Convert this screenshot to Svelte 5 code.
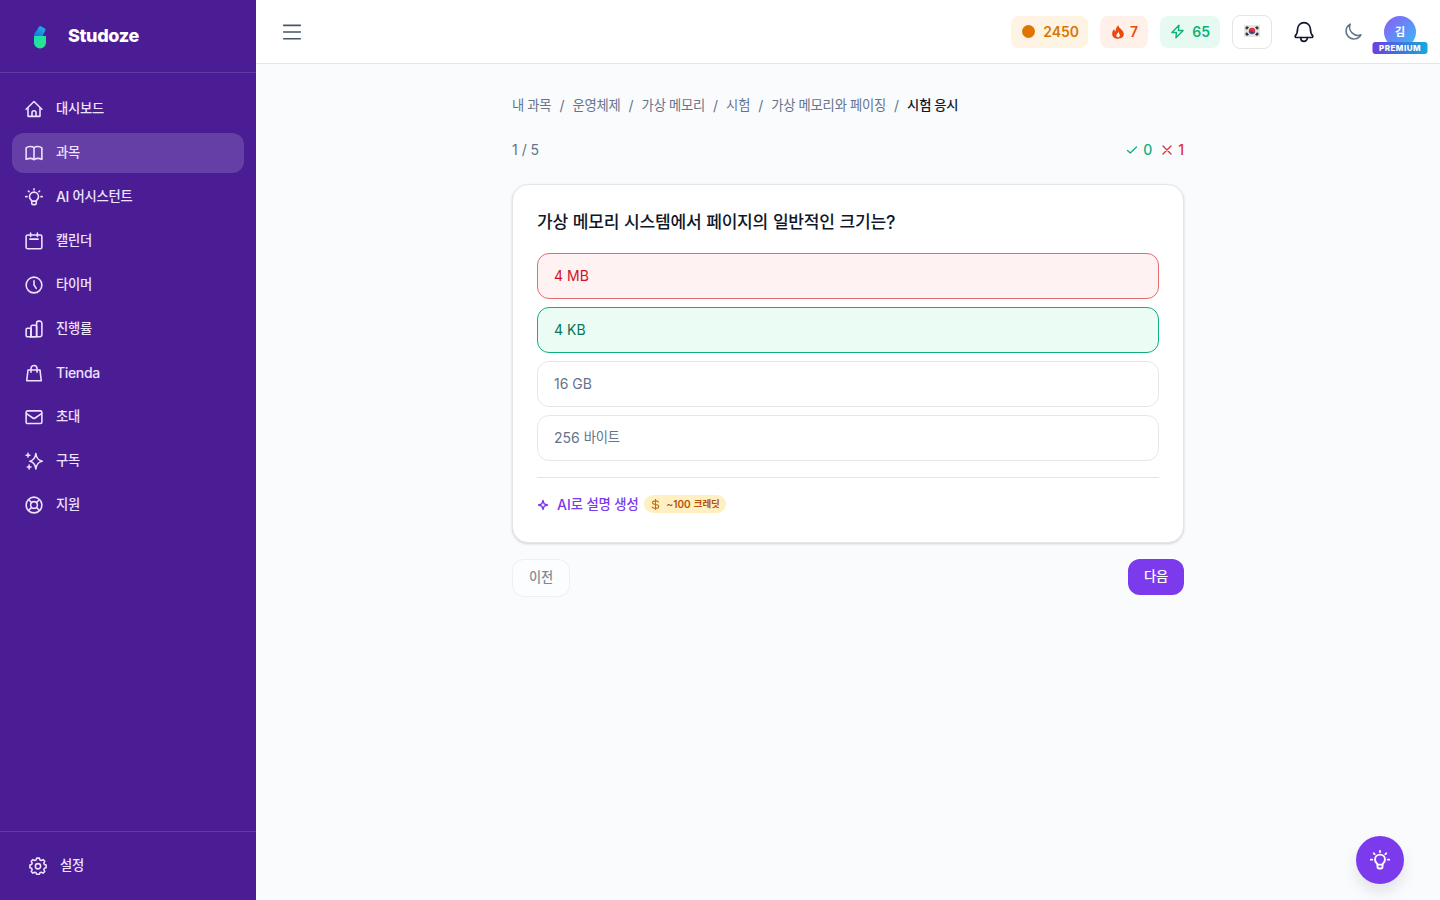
<script>
  const menu = [
    { label: '대시보드', icon: 'home' },
    { label: '과목', icon: 'book', active: true },
    { label: 'AI 어시스턴트', icon: 'bulb' },
    { label: '캘린더', icon: 'calendar' },
    { label: '타이머', icon: 'clock' },
    { label: '진행률', icon: 'chart' },
    { label: 'Tienda', icon: 'bag' },
    { label: '초대', icon: 'mail' },
    { label: '구독', icon: 'sparkles' },
    { label: '지원', icon: 'support' },
  ];

  const crumbs = ['내 과목', '운영체제', '가상 메모리', '시험', '가상 메모리와 페이징'];

  const options = [
    { text: '4 MB', state: 'wrong' },
    { text: '4 KB', state: 'correct' },
    { text: '16 GB', state: '' },
    { text: '256 바이트', state: '' },
  ];

  // 24x24 outline icons
  const icons = {
    home: ['M1.500 12.400 12 2l10.500 10.400', 'M4 10.500v11.300h16V10.500', 'M9.300 21.300v-4.300a2.700 2.700 0 0 1 5.400 0v4.300'],
    book: ['M12 5v15.800', 'M1.500 20.500V5.300C4.500 2.800 9.500 2.800 12 5c2.500-2.200 7.500-2.200 10.500.3v15.200c-3-1.400-8-1.400-10.500.3-2.500-1.700-7.500-1.700-10.500-.3z'],
    bulb: ['M9 17.500c0-1.500-3-2.400-3-6a6 6 0 0 1 12 0c0 3.600-3 4.500-3 6z', 'M9 17.500v2.700a2 2 0 0 0 2 2h2a2 2 0 0 0 2-2v-2.700', 'M12 1.200v1.300M4.500 4l1 1M19.500 4l-1 1M1 11.500h1.700M21.300 11.500H23'],
    calendar: ['M3.500 4h17a2 2 0 0 1 2 2v14.300a2 2 0 0 1-2 2h-17a2 2 0 0 1-2-2V6a2 2 0 0 1 2-2z', 'M7.500 1.500V6M16.500 1.500V6M6.500 9.500h11'],
    clock: ['M22.500 12a10.500 10.500 0 1 1-21 0 10.500 10.500 0 0 1 21 0z', 'M12 6.500V12l3 4.500'],
    chart: ['M1.500 12.700a1.700 1.700 0 0 1 1.700-1.700h4.800v11.300H3.200a1.700 1.700 0 0 1-1.700-1.700z', 'M8 22.300V9a2 2 0 0 1 2-2h3.500a2 2 0 0 1 2 2v13.300z', 'M15.500 22.300V4.200a2.700 2.700 0 0 1 2.700-2.700h1.600a2.700 2.700 0 0 1 2.700 2.700v15.600a2.500 2.500 0 0 1-2.500 2.500H7'],
    bag: ['M4 8h16l1.700 14.300H2.300z', 'M8 11V6a4 4 0 0 1 8 0v5'],
    mail: ['M3.500 3.800h17a2 2 0 0 1 2 2v12.900a2 2 0 0 1-2 2h-17a2 2 0 0 1-2-2V5.800a2 2 0 0 1 2-2z', 'm2 7.500 8.500 5.800a2.700 2.700 0 0 0 3 0L22 7.500'],
    sparkles: ['M14.500 2C13.700 8 12 11 6.500 12.300 12 13.500 13.700 16.500 14.500 22.500c.8-6 2.500-9 8.500-10.200-6-1.300-7.700-4.300-8.500-10.300z', 'M4 1.800v5M1.500 4.300h5M5.500 17.500v5M3 20h5'],
    support: ['M22.500 12a10.500 10.500 0 1 1-21 0 10.500 10.500 0 0 1 21 0z', 'M16.500 12a4.500 4.500 0 1 1-9 0 4.500 4.500 0 0 1 9 0z', 'm5 5 3.500 3.500M19 5l-3.500 3.500M5 19l3.500-3.500M19 19l-3.500-3.500'],
    settings: ['M10.200 1.500h3.600l.8 2.500 1.700.7 2.500-1.200L21 5.700l-1.200 2.500.7 1.700 2.300.8v3.600l-2.300.8-.7 1.700 1.200 2.500-2.200 2.200-2.500-1.200-1.700.7-.8 2h-3.600l-.8-2-1.700-.7-2.500 1.200L3 19.300l1.200-2.500-.7-1.700-2.300-.8v-3.600l2.300-.8.7-1.700L3 5.700l2.200-2.200 2.500 1.200L9.400 4z', 'M15.500 12.300a3.500 3.500 0 1 1-7 0 3.500 3.500 0 0 1 7 0z'],
    bell: ['M12 1.800a7 7 0 0 0-7 7c0 5-1.500 6.500-2.700 7.700 0 1 .7 1.500 1.700 1.500h16c1 0 1.700-.5 1.700-1.500-1.200-1.200-2.700-2.700-2.700-7.700a7 7 0 0 0-7-7z', 'M8.500 18v.700a3.500 3.500 0 0 0 7 0V18'],
    moon: ['M22.500 15.700A10.500 10.500 0 1 1 8.300 1.500 11 11 0 0 0 22.500 15.700z'],
    bolt: ['M14.300 2 3 13.500h7.300L9.500 22 21 10.300h-7.500z'],
    menu: ['M2 4h20M2 12h20M2 20h20'],
    check: ['m3 13 5.500 5L21 6'],
    cross: ['M4 4l16 16M20 4 4 20'],
    star: ['M12 3 14.300 9.700 21 12l-6.700 2.300L12 21l-2.300-6.700L3 12l6.700-2.300z'],
    dollar: ['M12 1v22M18.500 6.500c-1-1.800-3-2.500-6.500-2.500-4 0-6.500 1.300-6.500 4s2.500 3.500 6.500 4 7 1.300 7 4.200-3 4.300-7 4.300-6.300-1-7.200-3'],
  };

  // Hangul runs are set a little smaller than the latin text beside them
  const runs = (text) => text.split(/([가-힣]+)/).filter(Boolean);
</script>

{#snippet icon(name, size = 18, width = 2.1)}
  <svg
    class="icon"
    width={size}
    height={size}
    viewBox="0 0 24 24"
    fill="none"
    stroke="currentColor"
    stroke-width={width}
    stroke-linecap="round"
    stroke-linejoin="round"
    aria-hidden="true"
  >
    {#each icons[name] as d}<path {d} />{/each}
  </svg>
{/snippet}

{#snippet label(text)}{#each runs(text) as run}<span class:ko={/[가-힣]/.test(run)}>{run}</span>{/each}{/snippet}

<div class="layout">
  <aside class="sidebar">
    <div class="brand">
      <svg width="32" height="32" viewBox="0 0 32 32" aria-hidden="true">
        <defs>
          <linearGradient id="cap" x1="0" y1="1" x2="1" y2="0">
            <stop offset="0" stop-color="#1670d8" />
            <stop offset="1" stop-color="#22b8ee" />
          </linearGradient>
          <linearGradient id="base" x1="0" y1="0" x2="1" y2="1">
            <stop offset="0" stop-color="#16e0b4" />
            <stop offset="1" stop-color="#2fe583" />
          </linearGradient>
        </defs>
        <path d="M10 16c0-2.500 1.500-4 3-6l1.800-3q1-1.500 2.500-.6l3.500 2q1.300.8.500 2.200L18.500 16z" fill="url(#cap)" />
        <path d="M10 16h12v6.500a6 6 0 0 1-12 0z" fill="url(#base)" />
      </svg>
      <span class="brand-name">Studoze</span>
    </div>

    <nav class="menu">
      {#each menu as item}
        <a href="#top" class="menu-item" class:active={item.active}>
          <span class="menu-icon">{@render icon(item.icon)}</span>
          <span>{@render label(item.label)}</span>
        </a>
      {/each}
    </nav>

    <div class="sidebar-footer">
      <a href="#top" class="menu-item">
        <span class="menu-icon">{@render icon('settings')}</span>
        <span>{@render label('설정')}</span>
      </a>
    </div>
  </aside>

  <div class="content">
    <header class="topbar">
      <button class="icon-btn toggle" aria-label="메뉴">{@render icon('menu', 20, 1.9)}</button>

      <div class="stats">
        <div class="pill coins"><i class="coin"></i>2450</div>
        <div class="pill streak">
          <svg width="14" height="14" viewBox="0 0 24 24" aria-hidden="true">
            <path
              fill="currentColor"
              fill-rule="evenodd"
              d="M12.500.5c.5 3.500 3 5 5.500 7.500 2.500 2.600 4 5 4 7.500 0 5-4.500 8-10 8s-10-3-10-8.500c0-3.500 1.500-6 3.500-8 0 2 .8 3.500 2 4.200C8 7 9.500 3 12.500.5zM12.800 11c-.3 3-3.800 4-3.800 7 0 1.800 1.300 3 3 3s3.200-1.200 3.200-3.200c0-2.300-1.700-3.800-2.400-6.800z"
            />
          </svg>
          7
        </div>
        <div class="pill energy">{@render icon('bolt', 15, 2.2)}65</div>
        <button class="flag" aria-label="한국어">
          <svg width="16" height="12" viewBox="0 0 32 24" aria-hidden="true">
            <rect width="32" height="24" fill="#e4e6e6" />
            <circle cx="16" cy="12" r="6.500" fill="#d93440" />
            <path d="M9.700 10.500c2 4 5 1 6.300 1.500s3 4 6 1.500a6.500 6.500 0 0 1-12.300-3z" fill="#1c4d9c" />
            <path d="m3 7 4-4M5 9l4-5M25 3l4 4M23 4l4 5M3 17l4 4M5 15l4 5M25 21l4-4M23 20l4-5" stroke="#222" stroke-width="2.200" />
          </svg>
        </button>
        <button class="icon-btn bell" aria-label="알림">{@render icon('bell', 22, 1.8)}</button>
        <button class="icon-btn moon" aria-label="테마">{@render icon('moon', 18, 2)}</button>
        <div class="avatar">
          김
          <span class="badge">PREMIUM</span>
        </div>
      </div>
    </header>

    <main class="exam">
      <nav class="crumbs">
        {#each crumbs as crumb}
          <span>{@render label(crumb)}</span>
          <span>/</span>
        {/each}
        <span class="current">{@render label('시험 응시')}</span>
      </nav>

      <div class="progress">
        <span class="step">1 / 5</span>
        <div class="score">
          <span class="good">{@render icon('check', 12, 2.6)}0</span>
          <span class="bad">{@render icon('cross', 12, 2.6)}1</span>
        </div>
      </div>

      <section class="card">
        <h2>{@render label('가상 메모리 시스템에서 페이지의 일반적인 크기는?')}</h2>
        <div class="options">
          {#each options as option}
            <div class="option {option.state}"><span>{@render label(option.text)}</span></div>
          {/each}
        </div>
        <div class="explain">
          {@render icon('star', 12, 2.8)}
          <span class="explain-text">{@render label('AI로 설명 생성')}</span>
          <span class="cost">{@render icon('dollar', 11, 2.4)}<span>{@render label('~100 크레딧')}</span></span>
        </div>
      </section>

      <div class="actions">
        <button class="btn prev" disabled>{@render label('이전')}</button>
        <button class="btn next">{@render label('다음')}</button>
      </div>
    </main>
  </div>

  <button class="fab" aria-label="AI 어시스턴트">{@render icon('bulb', 20, 2.3)}</button>
</div>

<style>
  :global(body) {
    margin: 0;
  }

  .layout {
    display: flex;
    height: 100vh;
    overflow: hidden;
    background: #fafbfd;
    color: #0f172a;
    font-family: Inter, "Noto Sans CJK KR", sans-serif;
    font-size: 14px;
    line-height: 20px;
  }

  .layout *,
  .layout {
    box-sizing: border-box;
  }

  .ko {
    font-size: 0.95em;
    letter-spacing: -0.015em;
    line-height: 1;
    vertical-align: 1px;
  }

  button {
    font: inherit;
    padding: 0;
    border: 0;
    background: none;
  }

  .icon {
    display: block;
    flex-shrink: 0;
  }

  .sidebar {
    display: flex;
    flex-direction: column;
    width: 256px;
    flex-shrink: 0;
    background: #4a1d95;
    color: #ede2ff;
  }

  .brand {
    display: flex;
    align-items: center;
    gap: 12px;
    height: 73px;
    padding: 0 24px;
    border-bottom: 1px solid #6239a3;
  }

  .brand-name {
    color: #fff;
    font-size: 18px;
    font-weight: 800;
    letter-spacing: -0.35px;
  }

  .menu {
    display: flex;
    flex-direction: column;
    flex: 1;
    gap: 4px;
    padding: 16px 12px;
  }

  .menu-item {
    display: flex;
    align-items: center;
    gap: 12px;
    height: 40px;
    padding: 0 12px;
    border-radius: 12px;
    color: inherit;
    font-weight: 500;
    letter-spacing: -0.35px;
    text-decoration: none;
  }

  .menu-icon {
    display: flex;
    align-items: center;
    justify-content: center;
    width: 20px;
    height: 20px;
  }

  .menu-item.active {
    background: #663fa6;
  }

  .sidebar-footer {
    height: 69px;
    padding: 14px 16px;
    border-top: 1px solid #6239a3;
  }

  .content {
    flex: 1;
  }

  .topbar {
    display: flex;
    align-items: center;
    justify-content: space-between;
    height: 64px;
    padding: 0 24px 0 16px;
    border-bottom: 1px solid #e2e5ea;
    background: #fff;
  }

  .icon-btn {
    display: flex;
    align-items: center;
    justify-content: center;
    width: 40px;
    height: 40px;
    color: #0f172a;
  }

  .icon-btn.toggle {
    color: #475569;
  }

  .stats {
    display: flex;
    align-items: center;
    gap: 12px;
  }

  .pill {
    display: flex;
    align-items: center;
    justify-content: space-between;
    height: 32px;
    border-radius: 8px;
    font-weight: 600;
  }

  .coins {
    width: 77px;
    padding: 0 9px 0 11px;
    background: #fff4e3;
    color: #d97706;
  }

  .coin {
    width: 13px;
    height: 13px;
    border-radius: 50%;
    background: #e07400;
  }

  .streak {
    width: 48px;
    padding: 0 10px 0 11px;
    background: #fff0ea;
    color: #ea4b0c;
  }

  .energy {
    width: 60px;
    padding: 0 10px;
    background: #e6faf2;
    color: #10b07b;
  }

  .flag {
    display: flex;
    align-items: center;
    justify-content: center;
    width: 40px;
    height: 34px;
    border: 1px solid #e2e5ea;
    border-radius: 8px;
    background: #fff;
    padding-bottom: 2px;
  }

  .icon-btn.moon {
    width: 36px;
    padding-right: 2px;
    color: #64748b;
  }

  .avatar {
    position: relative;
    display: flex;
    align-items: center;
    justify-content: center;
    width: 32px;
    height: 32px;
    border-radius: 50%;
    background: linear-gradient(135deg, #8b5cf6, #38bdf8);
    color: #fff;
    font-size: 11px;
    font-weight: 600;
  }

  .badge {
    position: absolute;
    left: 50%;
    bottom: -6px;
    transform: translateX(-50%);
    width: 55px;
    height: 12px;
    border-radius: 3px;
    background: linear-gradient(90deg, #6d3fe0, #12aadb);
    font-size: 8px;
    font-weight: 800;
    line-height: 12px;
    letter-spacing: 0.5px;
    text-align: center;
  }

  .exam {
    width: 672px;
    margin: 0 auto;
    padding-top: 32px;
  }

  .crumbs {
    display: flex;
    gap: 8px;
    color: #64748b;
    white-space: nowrap;
    word-spacing: -0.7px;
  }

  .current {
    color: #0f172a;
    font-weight: 500;
  }

  .progress {
    display: flex;
    justify-content: space-between;
    margin: 24px 0;
    color: #64748b;
    font-weight: 500;
  }

  .step {
    font-weight: 400;
  }

  .score,
  .score span {
    display: flex;
    align-items: center;
  }

  .score {
    gap: 9px;
  }

  .score span {
    gap: 5px;
  }

  .good {
    color: #10b07b;
  }

  .bad {
    color: #e02f38;
  }

  .card {
    padding: 24px;
    border: 1px solid #e2e5ea;
    border-radius: 16px;
    background: #fff;
    box-shadow: 0 1px 3px rgba(15, 23, 42, 0.1), 0 1px 2px rgba(15, 23, 42, 0.08);
  }

  h2 {
    margin: 0 0 16px;
    font-size: 18px;
    font-weight: 500;
    line-height: 28px;
  }

  .options {
    display: flex;
    flex-direction: column;
    gap: 8px;
  }

  .option {
    display: flex;
    align-items: center;
    height: 46px;
    padding: 0 16px;
    border: 1px solid #e5e7eb;
    border-radius: 12px;
    color: #64748b;
  }

  .wrong {
    border-color: #e66b6f;
    background: #fef2f2;
    color: #d01224;
  }

  .correct {
    border-color: #10b07b;
    background: #eafcf4;
    color: #047857;
  }

  .explain {
    display: flex;
    align-items: center;
    height: 41px;
    margin-top: 16px;
    padding-top: 14px;
    border-top: 1px solid #e2e5ea;
    color: #7c3aed;
    font-weight: 500;
  }

  .explain-text {
    margin: 0 6px 0 8px;
  }

  .cost {
    display: flex;
    align-items: center;
    gap: 5px;
    height: 18px;
    margin-bottom: 2px;
    padding: 0 6px;
    border-radius: 9px;
    background: #fef0c3;
    color: #b45309;
    font-size: 10px;
    font-weight: 600;
    word-spacing: 0.7px;
  }

  .cost .icon {
    color: #c2700f;
  }

  .actions {
    display: flex;
    align-items: flex-start;
    justify-content: space-between;
    margin-top: 16px;
  }

  .btn {
    border-radius: 12px;
    font-weight: 500;
  }

  .prev {
    width: 58px;
    height: 38px;
    border: 1px solid #e2e5ea;
    background: #fff;
    color: #0f172a;
    opacity: 0.5;
  }

  .next {
    width: 56px;
    height: 36px;
    background: #7c3aed;
    color: #fff;
  }

  .fab {
    position: fixed;
    right: 36px;
    bottom: 16px;
    display: flex;
    align-items: center;
    justify-content: center;
    width: 48px;
    height: 48px;
    border-radius: 50%;
    background: #7c3aed;
    color: #fff;
    box-shadow: 0 8px 14px rgba(15, 23, 42, 0.1);
  }
</style>
